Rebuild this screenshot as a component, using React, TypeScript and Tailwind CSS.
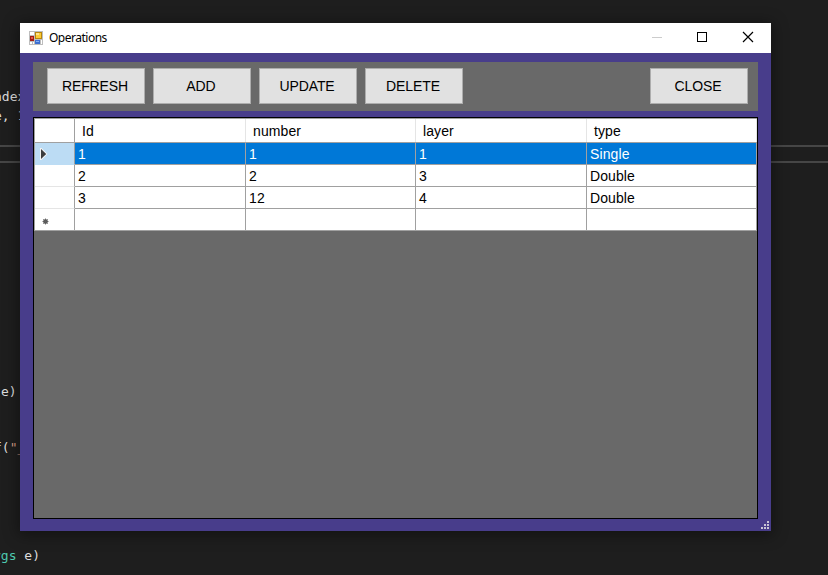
const rows = [
  ["1", "1", "1", "Single"],
  ["2", "2", "3", "Double"],
  ["3", "12", "4", "Double"],
  ["", "", "", ""],
];

const COLS = "grid grid-cols-[40px_171px_170px_171px_170px]";

function FormIcon() {
  return (
    <svg width="14" height="14" viewBox="0 0 14 14" shapeRendering="crispEdges">
      <rect width="14" height="14" fill="#bdbdbd" />
      <path fill="#fff" d="M1 1h4v3H1zM1 11h2v2H1zM4 11h1v2H4zM12 9h1v4h-1z" />
      <rect x="1" y="5" width="4" height="5" fill="#a51c12" />
      <rect x="2" y="6" width="2" height="2" fill="#e2574a" />
      <rect x="6" y="1" width="7" height="7" fill="#b8860b" />
      <rect x="7" y="2" width="5" height="5" fill="#fccb35" />
      <rect x="7" y="2" width="3" height="2" fill="#ffe58a" />
      <rect x="6" y="9" width="5" height="4" fill="#3d6fd1" />
      <rect x="7" y="10" width="3" height="1" fill="#84aef5" />
    </svg>
  );
}

function ToolButton({ label }: { label: string }) {
  return (
    <button className="flex h-9 w-[98px] items-center justify-center border border-[#adadad] bg-[#e1e1e1] pr-[2px] text-[14px] tracking-[-0.1px] text-black">
      {label}
    </button>
  );
}

function RowMark({ index }: { index: number }) {
  if (index === 0)
    return (
      <svg width="8" height="12" viewBox="0 0 8 12" className="mt-px">
        <path d="M0 0h1.5L7.5 6L1.5 12H0z" fill="#f4f4f4" />
        <path d="M1 1L6.2 6L1 11z" fill="#3c3c3c" />
      </svg>
    );
  if (index === 3)
    return (
      <svg width="7" height="7" viewBox="0 0 7 7" className="ml-[2px] mt-[3px]">
        <circle cx="3.5" cy="3.5" r="2.3" fill="#303030" />
        <path d="M3.5 .5v6M.5 3.5h6M1.3 1.3l4.4 4.4M5.7 1.3L1.3 5.7" stroke="#606060" strokeWidth=".9" />
      </svg>
    );
  return null;
}

function Editor() {
  return (
    <div className="flex h-[575px] w-[828px] flex-col overflow-hidden whitespace-pre bg-[#1e1e1e] font-['DejaVu_Sans_Mono',monospace] text-[13px] leading-[18px] text-[#dcdcdc]">
      <div className="mt-[88px] -ml-[6px] h-[19px]">ndex</div>
      <div className="-ml-[6px] h-[18px]">e, 1</div>
      <div className="mt-[20px] h-[2px] shrink-0 bg-[#464646]" />
      <div className="mt-[14px] h-[2px] shrink-0 bg-[#464646]" />
      <div className="mt-[220px] ml-px h-[18px]">e)</div>
      <div className="mt-[38px] -ml-[6px] h-[18px]">
        f(<span className="text-[#d69d85]">"_</span>
      </div>
      <div className="mt-[90px] -ml-[7px] h-[18px]">
        <span className="text-[#4ec9b0]">rgs</span> e)
      </div>
    </div>
  );
}

export default function App() {
  return (
    <div className="relative h-[575px] w-[828px] overflow-hidden font-['Liberation_Sans',Arial,sans-serif]">
      <Editor />
      <div className="absolute left-[20px] top-[23px] flex h-[508px] w-[751px] flex-col bg-[#483d8b] shadow-[0_2px_14px_2px_rgba(0,0,0,0.4)]">
        <div className="flex h-[30px] shrink-0 items-center bg-white pl-[9px]">
          <FormIcon />
          <span className="ml-[6px] font-['Noto_Sans',sans-serif] text-[12px] tracking-[-0.5px] text-black">
            Operations
          </span>
          <svg className="ml-auto" width="136" height="30" viewBox="0 0 136 30" fill="none" shapeRendering="crispEdges">
            <path d="M17 14.5h10" stroke="#cccccc" />
            <rect x="62.5" y="9.5" width="9" height="9" stroke="#000" />
            <path d="M108 9l10 10M118 9l-10 10" stroke="#000" strokeWidth="1.2" shapeRendering="auto" />
          </svg>
        </div>

        <div className="mx-[13px] mt-[9px] flex h-[49px] shrink-0 gap-2 bg-[#696969] pl-[14px] pr-[10px] pt-[6px]">
          <ToolButton label="REFRESH" />
          <ToolButton label="ADD" />
          <ToolButton label="UPDATE" />
          <ToolButton label="DELETE" />
          <div className="ml-auto">
            <ToolButton label="CLOSE" />
          </div>
        </div>

        <div className="mx-[13px] mt-[6px] h-[402px] shrink-0 border border-black bg-[#696969] text-[14px] tracking-[0.1px] text-black">
          <div className="w-[723px] border-l border-t border-[#a0a0a0]">
            <div className={`${COLS} h-6 grid-rows-[23px] border-b border-[#a0a0a0] bg-white leading-[24px]`}>
              <div className="border-r border-[#a0a0a0]" />
              {["Id", "number", "layer", "type"].map((h) => (
                <div key={h} className="border-r border-[#e5e5e5] pl-[7px]">
                  {h}
                </div>
              ))}
            </div>
            {rows.map((row, i) => (
              <div key={i} className={`${COLS} grid-rows-[22px] leading-[23px]`}>
                <div
                  className={`flex items-center border-b border-r border-r-[#a0a0a0] pl-[5px] ${
                    i === 0 ? "border-b-[#bcdcf4] bg-[#bcdcf4]" : i === 3 ? "border-b-[#a0a0a0] bg-white" : "border-b-[#e5e5e5] bg-white"
                  }`}
                >
                  <RowMark index={i} />
                </div>
                {row.map((cell, j) => (
                  <div
                    key={j}
                    className={`border-b border-r border-[#a0a0a0] pl-[3px] ${
                      i === 0 ? "bg-[#0078d7] text-white" : "bg-white"
                    }`}
                  >
                    {cell}
                  </div>
                ))}
              </div>
            ))}
          </div>
        </div>

        <svg className="absolute bottom-[2px] right-[2px]" width="8" height="8" viewBox="0 0 8 8" fill="#c8c4d4" shapeRendering="crispEdges">
          <path d="M6 0h2v2H6zM3 3h2v2H3zM6 3h2v2H6zM0 6h2v2H0zM3 6h2v2H3zM6 6h2v2H6z" />
        </svg>
      </div>
    </div>
  );
}
